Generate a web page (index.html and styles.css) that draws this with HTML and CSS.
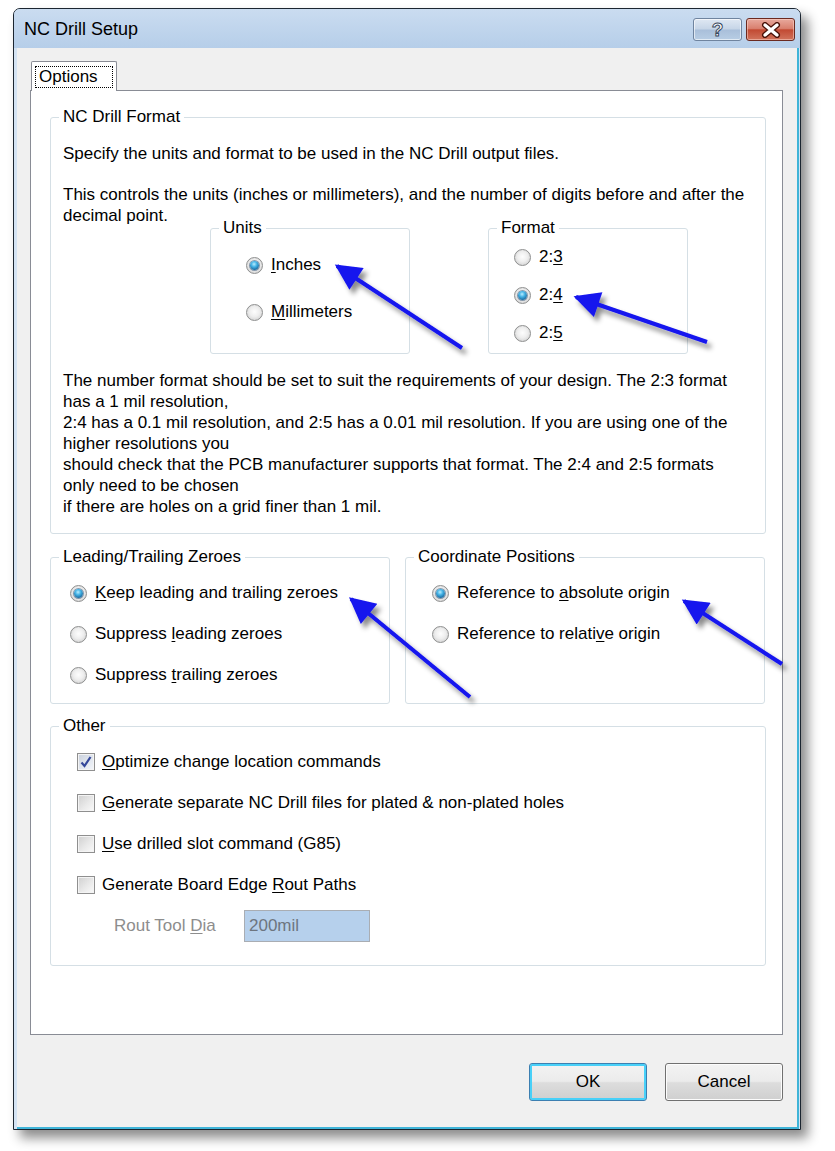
FILE: index.html
```html
<!DOCTYPE html>
<html>
<head>
<meta charset="utf-8">
<title>NC Drill Setup</title>
<link rel="stylesheet" href="styles.css">
</head>
<body>
<div class="window">
  <div class="titlebar">
    <div class="title">NC Drill Setup</div>
    <div class="tb-btn help">?</div>
    <div class="tb-btn close">
      <svg width="22" height="16" viewBox="0 0 22 16"><path d="M5 3 L17 13 M17 3 L5 13" stroke="#4a1208" stroke-width="6" stroke-linecap="round"/><path d="M5 3 L17 13 M17 3 L5 13" stroke="#fff" stroke-width="3.4" stroke-linecap="round"/></svg>
    </div>
  </div>
  <div class="client">
    <div class="tabs">
      <div class="tab"><span class="tab-label">Options</span></div>
    </div>
    <div class="panel">
      <fieldset class="group nc">
        <legend>NC Drill Format</legend>
        <p class="p1">Specify the units and format to be used in the NC Drill output files.</p>
        <p class="p2">This controls the units (inches or millimeters), and the number of digits before and after the<br>decimal point.</p>
        <div class="unit-row">
          <fieldset class="group units">
            <legend>Units</legend>
            <div class="opt first"><span class="radio on"></span><span><u>I</u>nches</span></div>
            <div class="opt mm"><span class="radio"></span><span><u>M</u>illimeters</span></div>
          </fieldset>
          <fieldset class="group format">
            <legend>Format</legend>
            <div class="opt first"><span class="radio"></span><span>2:<u>3</u></span></div>
            <div class="opt"><span class="radio on"></span><span>2:<u>4</u></span></div>
            <div class="opt"><span class="radio"></span><span>2:<u>5</u></span></div>
          </fieldset>
        </div>
        <p class="p3">The number format should be set to suit the requirements of your design. The 2:3 format<br>has a 1 mil resolution,<br>2:4 has a 0.1 mil resolution, and 2:5 has a 0.01 mil resolution. If you are using one of the<br>higher resolutions you<br>should check that the PCB manufacturer supports that format. The 2:4 and 2:5 formats<br>only need to be chosen<br>if there are holes on a grid finer than 1 mil.</p>
      </fieldset>

      <div class="row2">
        <fieldset class="group zeroes">
          <legend>Leading/Trailing Zeroes</legend>
          <div class="opt first"><span class="radio on"></span><span><u>K</u>eep leading and trailing zeroes</span></div>
          <div class="opt"><span class="radio"></span><span>Suppress <u>l</u>eading zeroes</span></div>
          <div class="opt"><span class="radio"></span><span>Suppress <u>t</u>railing zeroes</span></div>
        </fieldset>
        <fieldset class="group coords">
          <legend>Coordinate Positions</legend>
          <div class="opt first"><span class="radio on"></span><span>Reference to <u>a</u>bsolute origin</span></div>
          <div class="opt"><span class="radio"></span><span>Reference to relati<u>v</u>e origin</span></div>
        </fieldset>
      </div>

      <fieldset class="group other">
        <legend>Other</legend>
        <div class="opt first"><span class="cb on"><svg width="16" height="16" viewBox="0 0 16 16"><path d="M3.5 8.5 L6.5 12 L12.5 3" fill="none" stroke="#34479a" stroke-width="2.2"/></svg></span><span><u>O</u>ptimize change location commands</span></div>
        <div class="opt"><span class="cb"></span><span><u>G</u>enerate separate NC Drill files for plated &amp; non-plated holes</span></div>
        <div class="opt"><span class="cb"></span><span><u>U</u>se drilled slot command (G85)</span></div>
        <div class="opt"><span class="cb"></span><span>Generate Board Edge <u>R</u>out Paths</span></div>
        <div class="rout">
          <span class="rout-label">Rout Tool <u>D</u>ia</span>
          <span class="rout-input">200mil</span>
        </div>
      </fieldset>
    </div>
    <div class="buttons">
      <div class="btn default">OK</div>
      <div class="btn">Cancel</div>
    </div>
  </div>
</div>

<svg class="arrows" width="835" height="1151" viewBox="0 0 835 1151">
  <defs>
    <marker id="ah" viewBox="0 0 10 10" refX="9" refY="5" markerWidth="8" markerHeight="6.5" orient="auto" markerUnits="strokeWidth">
      <path d="M0,0 L10,5 L0,10 z" fill="#1414ee"/>
    </marker>
    <filter id="sh" x="-20%" y="-20%" width="140%" height="140%">
      <feDropShadow dx="4" dy="5" stdDeviation="2.5" flood-color="#000" flood-opacity="0.45"/>
    </filter>
  </defs>
  <g filter="url(#sh)" stroke="#1414ee" stroke-width="4" fill="none" stroke-linecap="butt">
    <line x1="462" y1="348" x2="337" y2="266" marker-end="url(#ah)"/>
    <line x1="707" y1="342" x2="576" y2="297" marker-end="url(#ah)"/>
    <line x1="470" y1="697" x2="351" y2="599" marker-end="url(#ah)"/>
    <line x1="782" y1="664" x2="684" y2="601" marker-end="url(#ah)"/>
  </g>
</svg>
</body>
</html>
```

FILE: styles.css
```css
html, body {
  margin: 0;
  padding: 0;
}
body {
  background: #fff;
  font-family: "Liberation Sans", Arial, sans-serif;
  font-size: 17px;
  color: #000;
  position: relative;
  width: 835px;
  height: 1151px;
  overflow: hidden;
}
u {
  text-decoration: underline;
  text-underline-offset: 2px;
}
.window {
  margin: 8px 0 0 13px;
  width: 788px;
  height: 1122px;
  box-sizing: border-box;
  border: 1px solid #1b2530;
  border-radius: 7px 7px 0 0;
  background: #d4e3f3;
  box-shadow: 7px 8px 12px rgba(0, 0, 0, 0.45);
  display: flex;
  flex-direction: column;
}
.titlebar {
  flex: none;
  height: 39px;
  display: flex;
  align-items: center;
  gap: 4px;
  padding: 0 5px 0 10px;
  background: linear-gradient(#cadcf0, #b6cee9);
  border-radius: 6px 6px 0 0;
}
.title {
  flex: 1;
  font-size: 18px;
  padding-top: 2px;
}
.tb-btn {
  width: 49px;
  height: 23px;
  box-sizing: border-box;
  border-radius: 3px;
  display: flex;
  align-items: center;
  justify-content: center;
  margin-top: 2px;
}
.help {
  border: 1px solid #6f849f;
  background: linear-gradient(#dfe8f3 0%, #c6d5e7 48%, #a9bfda 52%, #b8cde4 100%);
  color: #fff;
  font-weight: bold;
  font-size: 19px;
  -webkit-text-stroke: 1px #3a4a60;
  box-shadow: inset 0 0 0 1px rgba(255, 255, 255, 0.6);
}
.close {
  border: 1px solid #6b2a20;
  background: linear-gradient(#e8a99d 0%, #d9806f 45%, #c24a33 52%, #d1735c 100%);
  box-shadow: inset 0 0 0 1px rgba(255, 220, 210, 0.5);
}
.client {
  flex: 1;
  margin: 0 1px 0 3px;
  background: #f0f0f0;
  border-right: 2px solid #3fb4d8;
  border-bottom: 2px solid #3fb4d8;
  padding: 13px 14px 0 13px;
  display: flex;
  flex-direction: column;
}
.tabs {
  display: flex;
  height: 29px;
  flex: none;
}
.tab {
  margin-left: 1px;
  width: 86px;
  height: 30px;
  box-sizing: border-box;
  border: 1px solid #898c95;
  border-bottom: none;
  background: #fff;
  position: relative;
  z-index: 1;
  display: flex;
  align-items: flex-start;
  border-radius: 2px 2px 0 0;
}
.tab-label {
  margin: 4px 0 0 3px;
  border: 1px dotted #000;
  padding: 0 3px;
  line-height: 20px;
  width: 78px;
  box-sizing: border-box;
  text-align: left;
}
.panel {
  flex: none;
  height: 945px;
  box-sizing: border-box;
  border: 1px solid #898c95;
  background: #fff;
  padding: 16px 16px 0 19px;
}
.group {
  border: 1px solid #d5dfe5;
  border-radius: 3px;
  margin: 0;
  padding: 0;
  min-width: 0;
}
.group > legend {
  padding: 0 4px;
  margin-left: 8px;
  line-height: 20px;
}
.nc {
  padding: 0 12px 16px 0;
}
.nc p {
  margin: 0 0 0 12px;
  line-height: 21px;
  white-space: nowrap;
}
.nc .p1 {
  margin-top: 16px;
}
.nc .p2 {
  margin-top: 20px;
}
.nc .p3 {
  margin-top: 16px;
}
.unit-row {
  display: flex;
  margin: -8px 0 0 159px;
  gap: 78px;
}
.units {
  width: 200px;
  box-sizing: border-box;
  padding: 0 0 29px 0;
}
.units .opt {
  margin-left: 35px;
}
.format {
  width: 200px;
  box-sizing: border-box;
  padding: 0 0 8px 0;
}
.format .opt {
  margin-left: 25px;
}
.opt {
  display: flex;
  align-items: center;
  height: 24px;
  white-space: nowrap;
}
.units .opt.first {
  margin-top: 15px;
}
.units .opt.mm {
  margin-top: 23px;
}
.format .opt {
  margin-top: 14px;
}
.format .opt.first {
  margin-top: 7px;
}
.radio {
  flex: none;
  width: 17px;
  height: 17px;
  box-sizing: border-box;
  border-radius: 50%;
  border: 1px solid #8e8f8f;
  background: radial-gradient(circle at 50% 45%, #fdfdfd 0%, #eeeeee 45%, #d4d4d4 80%, #c4c4c4 100%);
  margin-right: 8px;
  display: flex;
  align-items: center;
  justify-content: center;
}
.radio.on::after {
  content: "";
  width: 9px;
  height: 9px;
  border-radius: 50%;
  background: radial-gradient(circle at 45% 35%, #b8ecff 0%, #46b4e6 35%, #1a6aa0 75%, #124a78 100%);
  box-shadow: 0 0 0 1px rgba(30, 70, 110, 0.5);
}
.row2 {
  display: grid;
  grid-template-columns: 340px 360px;
  gap: 15px;
  margin-top: 13px;
}
.zeroes {
  padding: 0 0 16px 0;
}
.zeroes .opt {
  margin-left: 19px;
}
.coords {
  padding: 0 0 16px 0;
}
.coords .opt {
  margin-left: 26px;
}
.zeroes .opt,
.coords .opt {
  margin-top: 17px;
}
.zeroes .opt.first,
.coords .opt.first {
  margin-top: 14px;
}
.other {
  margin-top: 12px;
  padding: 0 0 23px 0;
}
.other .opt {
  margin-top: 17px;
  margin-left: 26px;
}
.other .opt.first {
  margin-top: 14px;
}
.cb {
  flex: none;
  width: 18px;
  height: 18px;
  box-sizing: border-box;
  border: 1px solid #8f8f8f;
  background: linear-gradient(135deg, #cfcfcf 0%, #e9e9e9 55%, #fafafa 100%);
  box-shadow: inset 0 0 0 1px #f4f4f4;
  margin-right: 7px;
  display: flex;
  align-items: center;
  justify-content: center;
}
.cb.on {
  background: linear-gradient(135deg, #c9d0dc 0%, #e3e8f0 60%, #f4f6fa 100%);
}
.rout {
  display: flex;
  align-items: center;
  margin: 13px 0 0 63px;
  height: 32px;
}
.rout-label {
  width: 130px;
  color: #8d8d8d;
}
.rout-input {
  width: 126px;
  height: 32px;
  box-sizing: border-box;
  border: 1px solid #a9adb3;
  background: #b6d0ec;
  color: #6d7580;
  padding-left: 4px;
  line-height: 30px;
}
.buttons {
  display: flex;
  justify-content: flex-end;
  gap: 18px;
  margin-top: 28px;
}
.btn {
  width: 118px;
  height: 38px;
  box-sizing: border-box;
  border: 1px solid #707070;
  border-radius: 3px;
  background: linear-gradient(#f3f3f3 0%, #ebebeb 48%, #dddddd 52%, #cfcfcf 100%);
  box-shadow: inset 0 0 0 1px #fcfcfc;
  display: flex;
  align-items: center;
  justify-content: center;
}
.btn.default {
  border-color: #3c7fb1;
  box-shadow: inset 0 0 0 2px #48d0f8;
}
.arrows {
  position: absolute;
  left: 0;
  top: 0;
  pointer-events: none;
}
```
